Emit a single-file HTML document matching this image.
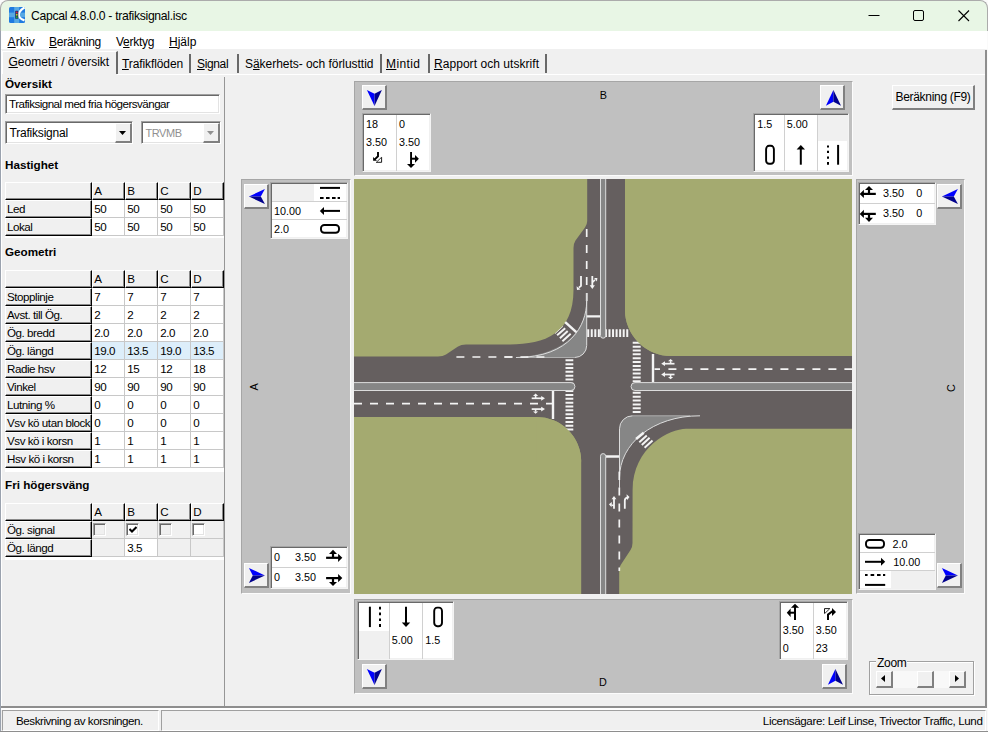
<!DOCTYPE html>
<html><head><meta charset="utf-8"><title>Capcal</title><style>
*{box-sizing:border-box}
html,body{margin:0;padding:0}
body{width:988px;height:732px;position:relative;overflow:hidden;background:#f0f0f0;font-family:"Liberation Sans",sans-serif;font-size:11.6px;letter-spacing:-0.45px;color:#000}
.abs{position:absolute}
.t{position:absolute;white-space:nowrap;line-height:1}
.ui{font-size:12px;letter-spacing:0}
.b{font-weight:bold;letter-spacing:0}
.panel{position:absolute;background:#c0c0c0;border-top:1px solid #a6a6a6;border-left:1px solid #a6a6a6;border-right:1px solid #fcfcfc;border-bottom:1px solid #fcfcfc}
.btn{position:absolute;background:#f0f0f0;border-top:1px solid #fff;border-left:1px solid #fff;border-right:2px solid #808080;border-bottom:2px solid #808080}
.grid{position:absolute;background:#fff;border:1px solid;border-color:#a6a6a6 #f4f4f4 #f4f4f4 #a6a6a6;box-shadow:inset 1px 1px 0 #696969,inset -1px -1px 0 #f0f0f0}
.hl{position:absolute;height:1px;background:#d0d0d0}
.vl{position:absolute;width:1px;background:#d0d0d0}
.hd{position:absolute;background:#f0f0f0;border-top:1px solid #fff;border-left:1px solid #fff;border-right:1px solid #000;border-bottom:1px solid #000;box-shadow:inset -1px -1px 0 #8a8a8a}
.cell{position:absolute;background:#fff;border-right:1px solid #c8c8c8;border-bottom:1px solid #c8c8c8}
</style></head><body>
<div class="abs" style="left:0;top:0;width:988px;height:31px;background:#fbfbfb"></div><div class="abs" style="left:0;top:0;width:988px;height:40px;background:#e8f6e5;border:1px solid #ababab;border-bottom:none;border-radius:8px 8px 0 0"></div>
<svg class="abs" style="left:9px;top:7px" width="16" height="16" viewBox="0 0 16 16"><rect x="0" y="0" width="16" height="16" rx="1.5" fill="#1f7ae0"/><rect x="0" y="5.6" width="16" height="4.6" fill="#56a8e4"/><rect x="5.2" y="0" width="5" height="16" fill="#56a8e4"/><path d="M15.5 0.5C11.5 3 9.6 5.5 9.8 8C10 10.5 12 12.3 15.5 13.4" stroke="#fff" stroke-width="2.2" fill="none"/><rect x="6.2" y="3.8" width="3.1" height="8" rx="0.6" fill="#1c2f66"/><circle cx="7.75" cy="5.4" r="0.95" fill="#e0203a"/><circle cx="7.75" cy="7.8" r="0.95" fill="#c8c820"/><circle cx="7.75" cy="10.2" r="0.95" fill="#20b030"/></svg>
<div class="t ui" id="title" style="left:31px;top:10px;font-size:12.2px;letter-spacing:-0.31px">Capcal 4.8.0.0 - trafiksignal.isc</div>
<svg class="abs" style="left:860px;top:0" width="128" height="31" viewBox="0 0 128 31"><path d="M8.5 15.5H19.5" stroke="#000" stroke-width="1"/><rect x="53.5" y="10.5" width="10" height="10" rx="1.5" fill="none" stroke="#000" stroke-width="1"/><path d="M98.5 10.5L109 21M109 10.5L98.5 21" stroke="#000" stroke-width="1.1" fill="none"/></svg>
<div class="abs" style="left:0;top:31px;width:988px;height:18px;background:#fff"></div>
<div class="t ui mn" style="left:7.5px;top:35.5px;letter-spacing:0.15px"><u>A</u>rkiv</div>
<div class="t ui mn" style="left:49px;top:35.5px;letter-spacing:-0.22px"><u>B</u>eräkning</div>
<div class="t ui mn" style="left:116px;top:35.5px;letter-spacing:-0.25px">V<u>e</u>rktyg</div>
<div class="t ui mn" style="left:169px;top:35.5px;letter-spacing:0px"><u>H</u>jälp</div>
<div class="abs" style="left:2px;top:51px;width:116px;height:23px;border-left:1px solid #fff;border-top:1px solid #fff;border-right:2px solid #696969;background:#f0f0f0"></div>
<div class="t ui tb" style="left:8.5px;top:56px"><u>G</u>eometri / översikt</div>
<div class="t ui tb" style="left:122px;top:58px;letter-spacing:-0.1px"><u>T</u>rafikflöden</div>
<div class="abs" style="left:189px;top:54px;width:2px;height:19px;background:#696969"></div>
<div class="t ui tb" style="left:197px;top:58px;letter-spacing:-0.35px"><u>S</u>ignal</div>
<div class="abs" style="left:237px;top:54px;width:2px;height:19px;background:#696969"></div>
<div class="t ui tb" style="left:245px;top:58px;letter-spacing:-0.04px">S<u>ä</u>kerhets- och förlusttid</div>
<div class="abs" style="left:380px;top:54px;width:2px;height:19px;background:#696969"></div>
<div class="t ui tb" style="left:386px;top:58px;letter-spacing:0.4px"><u>M</u>intid</div>
<div class="abs" style="left:428px;top:54px;width:2px;height:19px;background:#696969"></div>
<div class="t ui tb" style="left:434px;top:58px;letter-spacing:0.05px"><u>R</u>apport och utskrift</div>
<div class="abs" style="left:545px;top:54px;width:2px;height:19px;background:#696969"></div>
<div class="abs" style="left:0;top:74px;width:2px;height:1px;background:#fff"></div>
<div class="abs" style="left:117px;top:74px;width:868px;height:1px;background:#fff"></div>
<div class="abs" style="left:224px;top:77px;width:1px;height:629px;background:#969696"></div>
<div class="t b" style="left:5px;top:77.6px;font-size:11.7px">Översikt</div>
<div class="abs" style="left:5px;top:94px;width:215px;height:20px;background:#fff;border:1px solid;border-color:#a0a0a0 #fff #fff #a0a0a0;box-shadow:inset 1px 1px 0 #696969,inset -1px -1px 0 #e3e3e3"></div>
<div class="t" style="left:9px;top:98px;letter-spacing:-0.52px">Trafiksignal med fria högersvängar</div>
<div class="abs" style="left:5px;top:121px;width:128px;height:23px;background:#fff;border:1px solid;border-color:#a0a0a0 #fff #fff #a0a0a0;box-shadow:inset 1px 1px 0 #696969,inset -1px -1px 0 #e3e3e3"></div>
<div class="t ui" style="left:9.5px;top:127px;color:#000;font-size:12px;letter-spacing:-0.2px">Trafiksignal</div>
<div class="btn" style="left:115px;top:123px;width:17px;height:20px"></div>
<svg class="abs" style="left:119px;top:131px" width="8" height="5"><path d="M0 0H7L3.5 4Z" fill="#000"/></svg>
<div class="abs" style="left:141px;top:121px;width:80px;height:23px;background:#fff;border:1px solid;border-color:#a0a0a0 #fff #fff #a0a0a0;box-shadow:inset 1px 1px 0 #696969,inset -1px -1px 0 #e3e3e3"></div>
<div class="t ui" style="left:145.5px;top:127.5px;color:#909090;font-size:11px;letter-spacing:-0.45px">TRVMB</div>
<div class="btn" style="left:203px;top:123px;width:17px;height:20px"></div>
<svg class="abs" style="left:207px;top:131px" width="8" height="5"><path d="M0 0H7L3.5 4Z" fill="#909090"/></svg>
<div class="t b" style="left:5px;top:158.8px;font-size:11.7px">Hastighet</div>
<div class="t b" style="left:5px;top:245.8px;font-size:11.7px">Geometri</div>
<div class="t b" style="left:5px;top:478.8px;font-size:11.7px">Fri högersväng</div>
<div class="abs" style="left:5px;top:182px;width:219px;height:56px;background:#fff"></div>
<div class="hd" style="left:5px;top:182px;width:87px;height:18px"></div>
<div class="hd" style="left:92px;top:182px;width:33px;height:18px"></div>
<div class="t" style="left:94.2px;top:185px">A</div>
<div class="hd" style="left:125px;top:182px;width:33px;height:18px"></div>
<div class="t" style="left:127.2px;top:185px">B</div>
<div class="hd" style="left:158px;top:182px;width:33px;height:18px"></div>
<div class="t" style="left:160.2px;top:185px">C</div>
<div class="hd" style="left:191px;top:182px;width:33px;height:18px"></div>
<div class="t" style="left:193.2px;top:185px">D</div>
<div class="hd" style="left:5px;top:200px;width:87px;height:18px;overflow:hidden"><div class="t" style="left:1px;top:2.1px">Led</div></div>
<div class="cell" style="left:92px;top:200px;width:33px;height:18px;background:#fff">
<div class="t" style="left:2.3px;top:3.1px">50</div>
</div>
<div class="cell" style="left:125px;top:200px;width:33px;height:18px;background:#fff">
<div class="t" style="left:2.3px;top:3.1px">50</div>
</div>
<div class="cell" style="left:158px;top:200px;width:33px;height:18px;background:#fff">
<div class="t" style="left:2.3px;top:3.1px">50</div>
</div>
<div class="cell" style="left:191px;top:200px;width:33px;height:18px;background:#fff">
<div class="t" style="left:2.3px;top:3.1px">50</div>
</div>
<div class="hd" style="left:5px;top:218px;width:87px;height:18px;overflow:hidden"><div class="t" style="left:1px;top:2.1px">Lokal</div></div>
<div class="cell" style="left:92px;top:218px;width:33px;height:18px;background:#fff">
<div class="t" style="left:2.3px;top:3.1px">50</div>
</div>
<div class="cell" style="left:125px;top:218px;width:33px;height:18px;background:#fff">
<div class="t" style="left:2.3px;top:3.1px">50</div>
</div>
<div class="cell" style="left:158px;top:218px;width:33px;height:18px;background:#fff">
<div class="t" style="left:2.3px;top:3.1px">50</div>
</div>
<div class="cell" style="left:191px;top:218px;width:33px;height:18px;background:#fff">
<div class="t" style="left:2.3px;top:3.1px">50</div>
</div>
<div class="abs" style="left:5px;top:270px;width:219px;height:202px;background:#fff"></div>
<div class="hd" style="left:5px;top:270px;width:87px;height:18px"></div>
<div class="hd" style="left:92px;top:270px;width:33px;height:18px"></div>
<div class="t" style="left:94.2px;top:273px">A</div>
<div class="hd" style="left:125px;top:270px;width:33px;height:18px"></div>
<div class="t" style="left:127.2px;top:273px">B</div>
<div class="hd" style="left:158px;top:270px;width:33px;height:18px"></div>
<div class="t" style="left:160.2px;top:273px">C</div>
<div class="hd" style="left:191px;top:270px;width:33px;height:18px"></div>
<div class="t" style="left:193.2px;top:273px">D</div>
<div class="hd" style="left:5px;top:288px;width:87px;height:18px;overflow:hidden"><div class="t" style="left:1px;top:2.1px">Stopplinje</div></div>
<div class="cell" style="left:92px;top:288px;width:33px;height:18px;background:#fff">
<div class="t" style="left:2.3px;top:3.1px">7</div>
</div>
<div class="cell" style="left:125px;top:288px;width:33px;height:18px;background:#fff">
<div class="t" style="left:2.3px;top:3.1px">7</div>
</div>
<div class="cell" style="left:158px;top:288px;width:33px;height:18px;background:#fff">
<div class="t" style="left:2.3px;top:3.1px">7</div>
</div>
<div class="cell" style="left:191px;top:288px;width:33px;height:18px;background:#fff">
<div class="t" style="left:2.3px;top:3.1px">7</div>
</div>
<div class="hd" style="left:5px;top:306px;width:87px;height:18px;overflow:hidden"><div class="t" style="left:1px;top:2.1px">Avst. till Ög.</div></div>
<div class="cell" style="left:92px;top:306px;width:33px;height:18px;background:#fff">
<div class="t" style="left:2.3px;top:3.1px">2</div>
</div>
<div class="cell" style="left:125px;top:306px;width:33px;height:18px;background:#fff">
<div class="t" style="left:2.3px;top:3.1px">2</div>
</div>
<div class="cell" style="left:158px;top:306px;width:33px;height:18px;background:#fff">
<div class="t" style="left:2.3px;top:3.1px">2</div>
</div>
<div class="cell" style="left:191px;top:306px;width:33px;height:18px;background:#fff">
<div class="t" style="left:2.3px;top:3.1px">2</div>
</div>
<div class="hd" style="left:5px;top:324px;width:87px;height:18px;overflow:hidden"><div class="t" style="left:1px;top:2.1px">Ög. bredd</div></div>
<div class="cell" style="left:92px;top:324px;width:33px;height:18px;background:#fff">
<div class="t" style="left:2.3px;top:3.1px">2.0</div>
</div>
<div class="cell" style="left:125px;top:324px;width:33px;height:18px;background:#fff">
<div class="t" style="left:2.3px;top:3.1px">2.0</div>
</div>
<div class="cell" style="left:158px;top:324px;width:33px;height:18px;background:#fff">
<div class="t" style="left:2.3px;top:3.1px">2.0</div>
</div>
<div class="cell" style="left:191px;top:324px;width:33px;height:18px;background:#fff">
<div class="t" style="left:2.3px;top:3.1px">2.0</div>
</div>
<div class="hd" style="left:5px;top:342px;width:87px;height:18px;overflow:hidden"><div class="t" style="left:1px;top:2.1px">Ög. längd</div></div>
<div class="cell" style="left:92px;top:342px;width:33px;height:18px;background:#ddeefa">
<div class="t" style="left:2.3px;top:3.1px">19.0</div>
</div>
<div class="cell" style="left:125px;top:342px;width:33px;height:18px;background:#ddeefa">
<div class="t" style="left:2.3px;top:3.1px">13.5</div>
</div>
<div class="cell" style="left:158px;top:342px;width:33px;height:18px;background:#ddeefa">
<div class="t" style="left:2.3px;top:3.1px">19.0</div>
</div>
<div class="cell" style="left:191px;top:342px;width:33px;height:18px;background:#ddeefa">
<div class="t" style="left:2.3px;top:3.1px">13.5</div>
</div>
<div class="hd" style="left:5px;top:360px;width:87px;height:18px;overflow:hidden"><div class="t" style="left:1px;top:2.1px">Radie hsv</div></div>
<div class="cell" style="left:92px;top:360px;width:33px;height:18px;background:#fff">
<div class="t" style="left:2.3px;top:3.1px">12</div>
</div>
<div class="cell" style="left:125px;top:360px;width:33px;height:18px;background:#fff">
<div class="t" style="left:2.3px;top:3.1px">15</div>
</div>
<div class="cell" style="left:158px;top:360px;width:33px;height:18px;background:#fff">
<div class="t" style="left:2.3px;top:3.1px">12</div>
</div>
<div class="cell" style="left:191px;top:360px;width:33px;height:18px;background:#fff">
<div class="t" style="left:2.3px;top:3.1px">18</div>
</div>
<div class="hd" style="left:5px;top:378px;width:87px;height:18px;overflow:hidden"><div class="t" style="left:1px;top:2.1px">Vinkel</div></div>
<div class="cell" style="left:92px;top:378px;width:33px;height:18px;background:#fff">
<div class="t" style="left:2.3px;top:3.1px">90</div>
</div>
<div class="cell" style="left:125px;top:378px;width:33px;height:18px;background:#fff">
<div class="t" style="left:2.3px;top:3.1px">90</div>
</div>
<div class="cell" style="left:158px;top:378px;width:33px;height:18px;background:#fff">
<div class="t" style="left:2.3px;top:3.1px">90</div>
</div>
<div class="cell" style="left:191px;top:378px;width:33px;height:18px;background:#fff">
<div class="t" style="left:2.3px;top:3.1px">90</div>
</div>
<div class="hd" style="left:5px;top:396px;width:87px;height:18px;overflow:hidden"><div class="t" style="left:1px;top:2.1px">Lutning %</div></div>
<div class="cell" style="left:92px;top:396px;width:33px;height:18px;background:#fff">
<div class="t" style="left:2.3px;top:3.1px">0</div>
</div>
<div class="cell" style="left:125px;top:396px;width:33px;height:18px;background:#fff">
<div class="t" style="left:2.3px;top:3.1px">0</div>
</div>
<div class="cell" style="left:158px;top:396px;width:33px;height:18px;background:#fff">
<div class="t" style="left:2.3px;top:3.1px">0</div>
</div>
<div class="cell" style="left:191px;top:396px;width:33px;height:18px;background:#fff">
<div class="t" style="left:2.3px;top:3.1px">0</div>
</div>
<div class="hd" style="left:5px;top:414px;width:87px;height:18px;overflow:hidden"><div class="t" style="left:1px;top:2.1px">Vsv kö utan block</div></div>
<div class="cell" style="left:92px;top:414px;width:33px;height:18px;background:#fff">
<div class="t" style="left:2.3px;top:3.1px">0</div>
</div>
<div class="cell" style="left:125px;top:414px;width:33px;height:18px;background:#fff">
<div class="t" style="left:2.3px;top:3.1px">0</div>
</div>
<div class="cell" style="left:158px;top:414px;width:33px;height:18px;background:#fff">
<div class="t" style="left:2.3px;top:3.1px">0</div>
</div>
<div class="cell" style="left:191px;top:414px;width:33px;height:18px;background:#fff">
<div class="t" style="left:2.3px;top:3.1px">0</div>
</div>
<div class="hd" style="left:5px;top:432px;width:87px;height:18px;overflow:hidden"><div class="t" style="left:1px;top:2.1px">Vsv kö i korsn</div></div>
<div class="cell" style="left:92px;top:432px;width:33px;height:18px;background:#fff">
<div class="t" style="left:2.3px;top:3.1px">1</div>
</div>
<div class="cell" style="left:125px;top:432px;width:33px;height:18px;background:#fff">
<div class="t" style="left:2.3px;top:3.1px">1</div>
</div>
<div class="cell" style="left:158px;top:432px;width:33px;height:18px;background:#fff">
<div class="t" style="left:2.3px;top:3.1px">1</div>
</div>
<div class="cell" style="left:191px;top:432px;width:33px;height:18px;background:#fff">
<div class="t" style="left:2.3px;top:3.1px">1</div>
</div>
<div class="hd" style="left:5px;top:450px;width:87px;height:18px;overflow:hidden"><div class="t" style="left:1px;top:2.1px">Hsv kö i korsn</div></div>
<div class="cell" style="left:92px;top:450px;width:33px;height:18px;background:#fff">
<div class="t" style="left:2.3px;top:3.1px">1</div>
</div>
<div class="cell" style="left:125px;top:450px;width:33px;height:18px;background:#fff">
<div class="t" style="left:2.3px;top:3.1px">1</div>
</div>
<div class="cell" style="left:158px;top:450px;width:33px;height:18px;background:#fff">
<div class="t" style="left:2.3px;top:3.1px">1</div>
</div>
<div class="cell" style="left:191px;top:450px;width:33px;height:18px;background:#fff">
<div class="t" style="left:2.3px;top:3.1px">1</div>
</div>
<div class="abs" style="left:5px;top:503px;width:219px;height:57px;background:#fff"></div>
<div class="hd" style="left:5px;top:503px;width:87px;height:18px"></div>
<div class="hd" style="left:92px;top:503px;width:33px;height:18px"></div>
<div class="t" style="left:94.2px;top:506px">A</div>
<div class="hd" style="left:125px;top:503px;width:33px;height:18px"></div>
<div class="t" style="left:127.2px;top:506px">B</div>
<div class="hd" style="left:158px;top:503px;width:33px;height:18px"></div>
<div class="t" style="left:160.2px;top:506px">C</div>
<div class="hd" style="left:191px;top:503px;width:33px;height:18px"></div>
<div class="t" style="left:193.2px;top:506px">D</div>
<div class="hd" style="left:5px;top:521px;width:87px;height:18px;overflow:hidden"><div class="t" style="left:1px;top:2.1px">Ög. signal</div></div>
<div class="cell" style="left:92px;top:521px;width:33px;height:18px;background:#f0f0f0">
<div class="abs" style="left:1px;top:2px;width:13px;height:13px;background:#f0f0f0;border:1px solid;border-color:#a0a0a0 #fff #fff #a0a0a0;box-shadow:inset 1px 1px 0 #696969,inset -1px -1px 0 #e3e3e3"></div>
</div>
<div class="cell" style="left:125px;top:521px;width:33px;height:18px;background:#f0f0f0">
<div class="abs" style="left:1px;top:2px;width:13px;height:13px;background:#fff;border:1px solid;border-color:#a0a0a0 #fff #fff #a0a0a0;box-shadow:inset 1px 1px 0 #696969,inset -1px -1px 0 #e3e3e3"></div>
<svg class="abs" style="left:4px;top:5px" width="8" height="8"><path d="M0.5 3L3 5.5L7.5 1" stroke="#000" stroke-width="2" fill="none"/></svg>
</div>
<div class="cell" style="left:158px;top:521px;width:33px;height:18px;background:#f0f0f0">
<div class="abs" style="left:1px;top:2px;width:13px;height:13px;background:#f0f0f0;border:1px solid;border-color:#a0a0a0 #fff #fff #a0a0a0;box-shadow:inset 1px 1px 0 #696969,inset -1px -1px 0 #e3e3e3"></div>
</div>
<div class="cell" style="left:191px;top:521px;width:33px;height:18px;background:#f0f0f0">
<div class="abs" style="left:1px;top:2px;width:13px;height:13px;background:#fff;border:1px solid;border-color:#a0a0a0 #fff #fff #a0a0a0;box-shadow:inset 1px 1px 0 #696969,inset -1px -1px 0 #e3e3e3"></div>
</div>
<div class="hd" style="left:5px;top:539px;width:87px;height:18px;overflow:hidden"><div class="t" style="left:1px;top:2.1px">Ög. längd</div></div>
<div class="cell" style="left:92px;top:539px;width:33px;height:18px;background:#f0f0f0">
</div>
<div class="cell" style="left:125px;top:539px;width:33px;height:18px;background:#fff">
<div class="t" style="left:2.3px;top:3.1px">3.5</div>
</div>
<div class="cell" style="left:158px;top:539px;width:33px;height:18px;background:#f0f0f0">
</div>
<div class="cell" style="left:191px;top:539px;width:33px;height:18px;background:#f0f0f0">
</div>
<div class="abs" style="left:1px;top:706px;width:985px;height:2px;background:#8e8e8e"></div>
<div class="abs" style="left:1px;top:708px;width:987px;height:2px;background:#fff"></div>
<div class="abs" style="left:2px;top:710px;width:157px;height:21px;border-top:1px solid #a0a0a0;border-left:1px solid #a0a0a0;border-right:1px solid #fff;border-bottom:1px solid #fff"></div>
<div class="abs" style="left:161px;top:710px;width:825px;height:21px;border-top:1px solid #a0a0a0;border-left:1px solid #a0a0a0;border-right:1px solid #fff;border-bottom:1px solid #fff"></div>
<div class="t" id="st1" style="left:16px;top:715px">Beskrivning av korsningen.</div>
<div class="t" id="st2" style="right:5.5px;top:715px;letter-spacing:-0.36px">Licensägare: Leif Linse, Trivector Traffic, Lund</div>
<div class="abs" style="left:0;top:31px;width:1px;height:701px;background:#9aa2ae"></div>
<div class="abs" style="left:1px;top:50px;width:1px;height:656px;background:#fff"></div>
<div class="abs" style="left:985px;top:50px;width:2px;height:658px;background:#8e8e8e"></div>
<div class="abs" style="left:987px;top:31px;width:1px;height:701px;background:#fafafa"></div>
<div class="abs" style="left:0;top:731px;width:988px;height:1px;background:#8e8e8e"></div>
<div class="btn" style="left:892px;top:85px;width:83px;height:25px"></div>
<div class="t ui" id="bbtn" style="left:895.5px;top:91px;letter-spacing:-0.31px">Beräkning (F9)</div>
<div class="abs" style="left:869px;top:661px;width:105px;height:34px;border:1px solid #a0a0a0;box-shadow:1px 1px 0 #fff, inset 1px 1px 0 #fff"></div>
<div class="t ui" style="left:876px;top:657.2px;background:#f0f0f0;padding:0 1px;letter-spacing:-0.3px">Zoom</div>
<div class="abs" style="left:876px;top:671px;width:90px;height:17px;background:#f8f8f8"></div>
<div class="btn" style="left:876px;top:671px;width:17px;height:17px"></div>
<div class="btn" style="left:949px;top:671px;width:17px;height:17px"></div>
<div class="btn" style="left:917px;top:671px;width:17px;height:17px"></div>
<svg class="abs" style="left:881px;top:675px" width="5" height="8"><path d="M4 0V7L0 3.5Z" fill="#000"/></svg>
<svg class="abs" style="left:955px;top:675px" width="5" height="8"><path d="M0 0V7L4 3.5Z" fill="#000"/></svg>
<div class="panel" style="left:354px;top:81px;width:499px;height:95px"></div>
<div class="panel" style="left:354px;top:599px;width:499px;height:95px"></div>
<div class="panel" style="left:241px;top:179px;width:110px;height:415px"></div>
<div class="panel" style="left:856px;top:179px;width:109px;height:415px"></div>
<div class="abs" style="left:603.4px;top:95.3px;width:0;height:0"><div class="t" style="left:0;top:0;font-size:10.8px;letter-spacing:0;transform:translate(-50%,-50%) rotate(0deg)">B</div></div>
<div class="abs" style="left:602.8px;top:682.2px;width:0;height:0"><div class="t" style="left:0;top:0;font-size:10.8px;letter-spacing:0;transform:translate(-50%,-50%) rotate(0deg)">D</div></div>
<div class="abs" style="left:254.4px;top:386.5px;width:0;height:0"><div class="t" style="left:0;top:0;font-size:10.8px;letter-spacing:0;transform:translate(-50%,-50%) rotate(-90deg)">A</div></div>
<div class="abs" style="left:951.4px;top:387.9px;width:0;height:0"><div class="t" style="left:0;top:0;font-size:10.8px;letter-spacing:0;transform:translate(-50%,-50%) rotate(-90deg)">C</div></div>
<div class="btn" style="left:362px;top:85px;width:25px;height:25px"></div>
<svg class="abs" style="left:362px;top:85px" width="25" height="25" viewBox="0 0 25 25"><path d="M4.9 4.9L12.5 8.8V21Z" fill="#0000ff"/><path d="M19.9 4.9L12.5 8.8V21Z" fill="#00008c"/></svg>
<div class="btn" style="left:820px;top:85px;width:25px;height:25px"></div>
<svg class="abs" style="left:820px;top:85px" width="25" height="25" viewBox="0 0 25 25"><path d="M13.4 4.9L5.9 20.7L13.4 16.8Z" fill="#0000ff"/><path d="M13.4 4.9L21 20.7L13.4 16.8Z" fill="#00008c"/></svg>
<div class="btn" style="left:362px;top:664px;width:25px;height:25px"></div>
<svg class="abs" style="left:362px;top:664px" width="25" height="25" viewBox="0 0 25 25"><path d="M4.9 4.9L12.5 8.8V21Z" fill="#0000ff"/><path d="M19.9 4.9L12.5 8.8V21Z" fill="#00008c"/></svg>
<div class="btn" style="left:822px;top:664px;width:25px;height:25px"></div>
<svg class="abs" style="left:822px;top:664px" width="25" height="25" viewBox="0 0 25 25"><path d="M13.4 4.9L5.9 20.7L13.4 16.8Z" fill="#0000ff"/><path d="M13.4 4.9L21 20.7L13.4 16.8Z" fill="#00008c"/></svg>
<div class="btn" style="left:244px;top:184px;width:25px;height:25px"></div>
<svg class="abs" style="left:244px;top:184px" width="25" height="25" viewBox="0 0 25 25"><path d="M4.9 12.5L20.9 5L16.8 12.5Z" fill="#0000ff"/><path d="M4.9 12.5L20.9 20L16.8 12.5Z" fill="#00008c"/></svg>
<div class="btn" style="left:244px;top:563px;width:25px;height:25px"></div>
<svg class="abs" style="left:244px;top:563px" width="25" height="25" viewBox="0 0 25 25"><path d="M20.9 12.4L4.9 5L8.8 12.4Z" fill="#0000ff"/><path d="M20.9 12.4L4.9 20L8.8 12.4Z" fill="#00008c"/></svg>
<div class="btn" style="left:937px;top:184px;width:25px;height:25px"></div>
<svg class="abs" style="left:937px;top:184px" width="25" height="25" viewBox="0 0 25 25"><path d="M4.9 12.5L20.9 5L16.8 12.5Z" fill="#0000ff"/><path d="M4.9 12.5L20.9 20L16.8 12.5Z" fill="#00008c"/></svg>
<div class="btn" style="left:937px;top:563px;width:25px;height:25px"></div>
<svg class="abs" style="left:937px;top:563px" width="25" height="25" viewBox="0 0 25 25"><path d="M20.9 12.4L4.9 5L8.8 12.4Z" fill="#0000ff"/><path d="M20.9 12.4L4.9 20L8.8 12.4Z" fill="#00008c"/></svg>
<div class="grid" style="left:362px;top:113px;width:69px;height:59px"></div>
<div class="vl" style="left:396px;top:115px;height:56px"></div>
<div class="t" style="left:366.1px;top:119.1px;font-size:10.8px;letter-spacing:0">18</div>
<div class="t" style="left:399.0px;top:119.1px;font-size:10.8px;letter-spacing:0">0</div>
<div class="t" style="left:366.1px;top:137.1px;font-size:10.8px;letter-spacing:0">3.50</div>
<div class="t" style="left:399.0px;top:137.1px;font-size:10.8px;letter-spacing:0">3.50</div>
<div class="grid" style="left:753px;top:113px;width:96px;height:59px"></div>
<div class="vl" style="left:784px;top:115px;height:56px"></div>
<div class="vl" style="left:817px;top:115px;height:56px"></div>
<div class="abs" style="left:818px;top:115px;width:30px;height:26px;background:#f0f0f0"></div>
<div class="t" style="left:757.2px;top:119.0px;font-size:10.8px;letter-spacing:0">1.5</div>
<div class="t" style="left:786.7px;top:119.0px;font-size:10.8px;letter-spacing:0">5.00</div>
<div class="grid" style="left:270px;top:182px;width:78px;height:57px"></div>
<div class="hl" style="top:201px;left:272px;width:75px"></div>
<div class="hl" style="top:219px;left:272px;width:75px"></div>
<div class="abs" style="left:272px;top:184px;width:42px;height:17px;background:#f0f0f0"></div>
<div class="t" style="left:274.1px;top:206.0px;font-size:10.8px;letter-spacing:0">10.00</div>
<div class="t" style="left:274.1px;top:224.0px;font-size:10.8px;letter-spacing:0">2.0</div>
<div class="grid" style="left:270px;top:546px;width:78px;height:43px"></div>
<div class="hl" style="top:567px;left:272px;width:75px"></div>
<div class="t" style="left:274.0px;top:552.1px;font-size:10.8px;letter-spacing:0">0</div>
<div class="t" style="left:294.9px;top:552.1px;font-size:10.8px;letter-spacing:0">3.50</div>
<div class="t" style="left:274.0px;top:572.1px;font-size:10.8px;letter-spacing:0">0</div>
<div class="t" style="left:294.9px;top:572.1px;font-size:10.8px;letter-spacing:0">3.50</div>
<div class="grid" style="left:858px;top:182px;width:78px;height:43px"></div>
<div class="hl" style="top:203px;left:860px;width:75px"></div>
<div class="t" style="left:882.9px;top:187.8px;font-size:10.8px;letter-spacing:0">3.50</div>
<div class="t" style="left:916.3px;top:187.8px;font-size:10.8px;letter-spacing:0">0</div>
<div class="t" style="left:882.9px;top:207.9px;font-size:10.8px;letter-spacing:0">3.50</div>
<div class="t" style="left:916.3px;top:207.9px;font-size:10.8px;letter-spacing:0">0</div>
<div class="grid" style="left:858px;top:533px;width:78px;height:57px"></div>
<div class="hl" style="top:552px;left:860px;width:75px"></div>
<div class="hl" style="top:570px;left:860px;width:75px"></div>
<div class="abs" style="left:891px;top:571px;width:44px;height:18px;background:#f0f0f0"></div>
<div class="t" style="left:892.5px;top:539.0px;font-size:10.8px;letter-spacing:0">2.0</div>
<div class="t" style="left:893.2px;top:557.0px;font-size:10.8px;letter-spacing:0">10.00</div>
<div class="grid" style="left:357px;top:601px;width:97px;height:59px"></div>
<div class="vl" style="left:389px;top:603px;height:56px"></div>
<div class="vl" style="left:422px;top:603px;height:56px"></div>
<div class="abs" style="left:359px;top:631px;width:30px;height:28px;background:#f0f0f0"></div>
<div class="t" style="left:391.8px;top:635.0px;font-size:10.8px;letter-spacing:0">5.00</div>
<div class="t" style="left:425.2px;top:635.0px;font-size:10.8px;letter-spacing:0">1.5</div>
<div class="grid" style="left:779px;top:601px;width:69px;height:59px"></div>
<div class="vl" style="left:813px;top:603px;height:56px"></div>
<div class="t" style="left:782.8px;top:625.1px;font-size:10.8px;letter-spacing:0">3.50</div>
<div class="t" style="left:815.7px;top:625.1px;font-size:10.8px;letter-spacing:0">3.50</div>
<div class="t" style="left:782.8px;top:642.9px;font-size:10.8px;letter-spacing:0">0</div>
<div class="t" style="left:815.7px;top:642.9px;font-size:10.8px;letter-spacing:0">23</div>
<svg class="abs" style="left:0;top:0;pointer-events:none" width="988" height="732" viewBox="0 0 988 732"><path d="M378 152V156.3L374.8 159.4" fill="none" stroke="#000" stroke-width="1.9"/><path d="M373.1 157V160.8H377Z" fill="#000"/><path d="M381.6 157.1V162.3H376.1" fill="none" stroke="#000" stroke-width="0.9"/><path d="M381.2 157.6L376.6 162" fill="none" stroke="#000" stroke-width="0.8"/><path d="M411.05 152V165" fill="none" stroke="#000" stroke-width="1.9"/><path d="M407 164H415L411 168Z" fill="#000"/><path d="M411.2 158.7H416" fill="none" stroke="#000" stroke-width="2"/><path d="M415 154.9L418.9 158.8L415 162.8Z" fill="#000"/><rect x="766.1" y="145.8" width="7.8" height="18" rx="3" ry="3.4" fill="none" stroke="#000" stroke-width="1.9"/><path d="M800.8 147V164.7" fill="none" stroke="#000" stroke-width="2"/><path d="M796.6 149.4H805L800.8 144.9Z" fill="#000"/><path d="M828 145.4V147.6M828 150.8V152.9M828 156.6V158.8M828 162V164.7" fill="none" stroke="#000" stroke-width="2"/><path d="M838.1 144.9V164.7" fill="none" stroke="#000" stroke-width="2"/><path d="M320 187.9H340" fill="none" stroke="#000" stroke-width="2"/><path d="M320 197.9H323.6M326 197.9H329.6M332 197.9H335.6M337.6 197.9H340" fill="none" stroke="#000" stroke-width="2"/><path d="M322 210.9H340" fill="none" stroke="#000" stroke-width="2"/><path d="M324 206.9V214.9L319.8 210.9Z" fill="#000"/><rect x="321" y="225" width="18" height="7.8" rx="3.4" ry="3" fill="none" stroke="#000" stroke-width="1.9"/><path d="M326.1 557.8H339" fill="none" stroke="#000" stroke-width="2.2"/><path d="M338.1 553.6999999999999L342.3 557.8L338.1 561.9Z" fill="#000"/><path d="M333 557.8V553.3" fill="none" stroke="#000" stroke-width="2.2"/><path d="M329 554.0H337L333 549.8Z" fill="#000"/><path d="M326.1 578.1H339" fill="none" stroke="#000" stroke-width="2.2"/><path d="M338.1 574.0L342.3 578.1L338.1 582.2Z" fill="#000"/><path d="M333 578.1V582.6" fill="none" stroke="#000" stroke-width="2.2"/><path d="M329 581.9H337L333 586.1Z" fill="#000"/><path d="M875.8 193.9H863" fill="none" stroke="#000" stroke-width="2.2"/><path d="M863.9 189.8L859.7 193.9L863.9 198.0Z" fill="#000"/><path d="M869 193.9V189.4" fill="none" stroke="#000" stroke-width="2.2"/><path d="M865 190.1H873L869 185.9Z" fill="#000"/><path d="M875.8 213.9H863" fill="none" stroke="#000" stroke-width="2.2"/><path d="M863.9 209.8L859.7 213.9L863.9 218.0Z" fill="#000"/><path d="M869 213.9V218.4" fill="none" stroke="#000" stroke-width="2.2"/><path d="M865 217.70000000000002H873L869 221.9Z" fill="#000"/><rect x="866" y="540" width="18" height="7.8" rx="3.4" ry="3" fill="none" stroke="#000" stroke-width="1.9"/><path d="M865 561.8H883" fill="none" stroke="#000" stroke-width="2"/><path d="M881 557.8V565.8L885.2 561.8Z" fill="#000"/><path d="M865 575H867.6M870.6 575H874.2M877 575H880.6M883 575H885.2" fill="none" stroke="#000" stroke-width="2"/><path d="M865 584.9H885.2" fill="none" stroke="#000" stroke-width="2"/><path d="M369.9 606.7V627.1" fill="none" stroke="#000" stroke-width="2"/><path d="M380 606.7V609.4M380 612.6V615.3M380 618.5V620.9M380 624.1V627.1" fill="none" stroke="#000" stroke-width="2"/><path d="M406 606.7V625" fill="none" stroke="#000" stroke-width="2"/><path d="M401.8 622.6H410.2L406 627.1Z" fill="#000"/><rect x="434.2" y="607.6" width="7.8" height="18.6" rx="3" ry="3.4" fill="none" stroke="#000" stroke-width="1.9"/><path d="M795 607V620" fill="none" stroke="#000" stroke-width="2"/><path d="M790.9 607.8H799.1L795 603.8Z" fill="#000"/><path d="M795 612.7H790" fill="none" stroke="#000" stroke-width="2"/><path d="M790.6 608.6L786.8 612.7L790.6 616.9Z" fill="#000"/><path d="M828 620V614.6L832.4 611.2" fill="none" stroke="#000" stroke-width="2"/><path d="M832 608L836 612L832 616Z" fill="#000"/><path d="M824.5 613.6V608.6H829.9" fill="none" stroke="#000" stroke-width="0.9"/><path d="M829.6 608.9L824.8 613.4" fill="none" stroke="#000" stroke-width="0.8"/></svg>
<svg class="abs" style="left:354px;top:179px" width="498" height="415" viewBox="354 179 498 415" shape-rendering="auto">
<rect x="354" y="179" width="498" height="415" fill="#a4aa70"/>
<path d="M587.2 179 L587.2 221 Q587.2 224.5 585 227.5 L575.5 240.5 Q573.5 243.5 573.5 248 L573.5 290 C573.5 333.5 545 344.4 510 344.4 L466 344.4 Q461 344.4 458 346.5 L446 354.5 Q443 356.5 438 356.5 L354 356.5 L354 417 L536.4 417 A44.6 44.6 0 0 1 581.2 461.6 L581.2 594 L619.2 594 L619.2 570 Q619.2 567 621 564.5 L630.5 550 Q632.5 547 632.5 543 L632.6 490 C632.6 447.2 670 428.7 686 428.7 L852 428.7 L852 356 L671 356 A46 46 0 0 1 625 310 L625 179 Z" fill="#655f5f"/>
<path d="M588.20 329.3V336.9M591.75 329.3V336.9M595.30 329.3V336.9M598.85 329.3V336.9M602.40 329.3V336.9M605.95 329.3V336.9M609.50 329.3V336.9M613.05 329.3V336.9M616.60 329.3V336.9M620.15 329.3V336.9M623.70 329.3V336.9M627.25 329.3V336.9" stroke="#f4f4f4" stroke-width="2" fill="none"/>
<path d="M565.5 360.30H573.3M565.5 364.15H573.3M565.5 368.00H573.3M565.5 371.85H573.3M565.5 375.70H573.3M565.5 379.55H573.3M565.5 383.40H573.3M565.5 387.25H573.3M565.5 391.10H573.3M565.5 394.95H573.3M565.5 398.80H573.3M565.5 402.65H573.3M565.5 406.50H573.3M565.5 410.35H573.3M565.5 414.20H573.3M565.5 418.05H573.3M565.5 421.90H573.3M565.5 425.75H573.3M565.5 429.60H573.3" stroke="#f4f4f4" stroke-width="2" fill="none"/>
<path d="M632.7 342.80H640.7M632.7 346.65H640.7M632.7 350.50H640.7M632.7 354.35H640.7M632.7 358.20H640.7M632.7 362.05H640.7M632.7 365.90H640.7M632.7 369.75H640.7M632.7 373.60H640.7M632.7 377.45H640.7M632.7 381.30H640.7M632.7 385.15H640.7M632.7 389.00H640.7M632.7 392.85H640.7M632.7 396.70H640.7M632.7 400.55H640.7M632.7 404.40H640.7M632.7 408.25H640.7M632.7 412.10H640.7" stroke="#f4f4f4" stroke-width="2" fill="none"/>
<path d="M536.4 417 A44.6 44.6 0 0 1 581.2 461.6 L536.4 461.6Z" fill="#a4aa70"/>
<path d="M671 356 A46 46 0 0 1 625 310 L671 310Z" fill="#a4aa70"/>
<path d="M586.2 316.4H600.5 M606 456.5H620 M553 390.5V419 M653 354V382.5" stroke="#f4f4f4" stroke-width="2.4" fill="none"/>
<path d="M586.7 229V301" stroke="#f4f4f4" stroke-width="1.7" stroke-dasharray="8 8" fill="none"/>
<path d="M619.3 487.6V571" stroke="#f4f4f4" stroke-width="1.7" stroke-dasharray="8 8" fill="none"/>
<path d="M456.4 357H520" stroke="#f4f4f4" stroke-width="1.7" stroke-dasharray="8 8" fill="none"/>
<path d="M354 403.7H553" stroke="#f4f4f4" stroke-width="1.7" stroke-dasharray="8 8" fill="none"/>
<path d="M654.5 369.2H660 M668.4 369.2H852" stroke="#f4f4f4" stroke-width="1.7" stroke-dasharray="8 8" fill="none"/>
<path d="M600.5 178V335.6A2.6 2.6 0 0 0 605.7 335.6V178Z" fill="#868686" stroke="#dcdcdc" stroke-width="1"/>
<path d="M600.5 595V456.2A2.6 2.6 0 0 1 605.7 456.2V595Z" fill="#868686" stroke="#dcdcdc" stroke-width="1"/>
<path d="M353 382.6H571A3.95 3.95 0 0 1 571 390.5H353Z" fill="#868686" stroke="#dcdcdc" stroke-width="1"/>
<path d="M853 382.6H635A3.95 3.95 0 0 0 635 390.5H853Z" fill="#868686" stroke="#dcdcdc" stroke-width="1"/>
<path d="M586.7 300 L586.7 345.5 A12 12 0 0 1 574.7 357.5 L507.5 357.6 C570.8 357.6 586.6 324.2 586.6 302Z" fill="#868686"/>
<path d="M574.7 357.5 L522 357.5" fill="none" stroke="#b4b4b4" stroke-width="0.9"/>
<path d="M516 357.5 C570.8 357.6 586.6 324.2 586.6 302 L586.7 293 L586.7 345.5 A12 12 0 0 1 574.7 357.5" fill="none" stroke="#dcdcdc" stroke-width="1" stroke-linejoin="round"/>
<path d="M619.5 480 L619.5 428.8 A13 13 0 0 1 632.5 415.8 L702 415.8 C652.5 415.8 619.5 443.8 619.5 478Z" fill="#868686"/>
<path d="M632.5 415.8 L690 415.8" fill="none" stroke="#b4b4b4" stroke-width="0.9"/>
<path d="M700 415.8 C652.5 415.8 619.5 443.8 619.5 478 L619.5 488 L619.5 428.8 A13 13 0 0 1 632.5 415.8" fill="none" stroke="#dcdcdc" stroke-width="1" stroke-linejoin="round"/>
<path d="M504.4 357H545" stroke="#f4f4f4" stroke-width="1.7" stroke-dasharray="8 8" fill="none"/>
<path d="M619.3 471.6V480" stroke="#f4f4f4" stroke-width="1.7" fill="none"/>
<path d="M565.2 322.1L576.3 332.2" stroke="#f4f4f4" stroke-width="2.5"/>
<path d="M557.1 335.3L565.2 328.2M559.9 338.3L567.7 331M562.4 341.3L570.7 333.7" stroke="#f4f4f4" stroke-width="2"/>
<path d="M555 333.7L563.1 326.2" stroke="#f4f4f4" stroke-width="0.8"/>
<path d="M636.1 439L643.7 432.8" stroke="#f4f4f4" stroke-width="2.6"/>
<path d="M639.3 442.2L646.8 435.6M641.8 445L649.6 437.8M644.6 447.8L652.5 440.6" stroke="#f4f4f4" stroke-width="2"/>
<path d="M581 276V285.8L578.9 287.7" stroke="#f4f4f4" stroke-width="1.8" fill="none"/>
<path d="M576.6 286.2L577 290L580.6 289.4Z" fill="#f4f4f4"/>
<path d="M592.3 276V286" stroke="#f4f4f4" stroke-width="1.8" fill="none"/>
<path d="M589.7 285.2H594.9L592.3 289Z" fill="#f4f4f4"/>
<path d="M592.3 282.4L595 279.9" stroke="#f4f4f4" stroke-width="1.5" fill="none"/>
<path d="M597.4 277.9L594.1 277.9L596.9 281.5Z" fill="#f4f4f4"/>
<path d="M614 508.8V498.5" stroke="#f4f4f4" stroke-width="1.8" fill="none"/>
<path d="M611.6 499.2H616.4L614 496Z" fill="#f4f4f4"/>
<path d="M614 505.8L611.4 504.9" stroke="#f4f4f4" stroke-width="1.5" fill="none"/>
<path d="M608.9 504.3L611.9 502.1L611.5 507.2Z" fill="#f4f4f4"/>
<path d="M624.8 508.8V500.6Q624.8 498 627.2 497.6" stroke="#f4f4f4" stroke-width="1.8" fill="none"/>
<path d="M629.5 497.1L626.6 494.3L627 500.3Z" fill="#f4f4f4"/>
<path d="M531.7 398.3L542.0 398.3" stroke="#f4f4f4" stroke-width="1.7" fill="none"/>
<path d="M545.0 398.3L541.2 395.9L541.2 400.7Z" fill="#f4f4f4"/>
<path d="M535.6 398.3L535.6 395.7" stroke="#f4f4f4" stroke-width="1.6" fill="none"/>
<path d="M535.6 393.6L533.0 395.9L538.2 395.9Z" fill="#f4f4f4"/>
<path d="M531.7 409.1L542.0 409.1" stroke="#f4f4f4" stroke-width="1.7" fill="none"/>
<path d="M545.0 409.1L541.2 406.7L541.2 411.5Z" fill="#f4f4f4"/>
<path d="M535.6 409.1L535.6 411.7" stroke="#f4f4f4" stroke-width="1.6" fill="none"/>
<path d="M535.6 413.8L533.0 411.5L538.2 411.5Z" fill="#f4f4f4"/>
<path d="M674.5 374.5L664.2 374.5" stroke="#f4f4f4" stroke-width="1.7" fill="none"/>
<path d="M661.2 374.5L665.0 376.9L665.0 372.1Z" fill="#f4f4f4"/>
<path d="M670.6 374.5L670.6 377.1" stroke="#f4f4f4" stroke-width="1.6" fill="none"/>
<path d="M670.6 379.2L673.2 376.9L668.0 376.9Z" fill="#f4f4f4"/>
<path d="M674.5 363.7L664.2 363.7" stroke="#f4f4f4" stroke-width="1.7" fill="none"/>
<path d="M661.2 363.7L665.0 366.1L665.0 361.3Z" fill="#f4f4f4"/>
<path d="M670.6 363.7L670.6 361.1" stroke="#f4f4f4" stroke-width="1.6" fill="none"/>
<path d="M670.6 359.0L673.2 361.3L668.0 361.3Z" fill="#f4f4f4"/>
</svg>
</body></html>
